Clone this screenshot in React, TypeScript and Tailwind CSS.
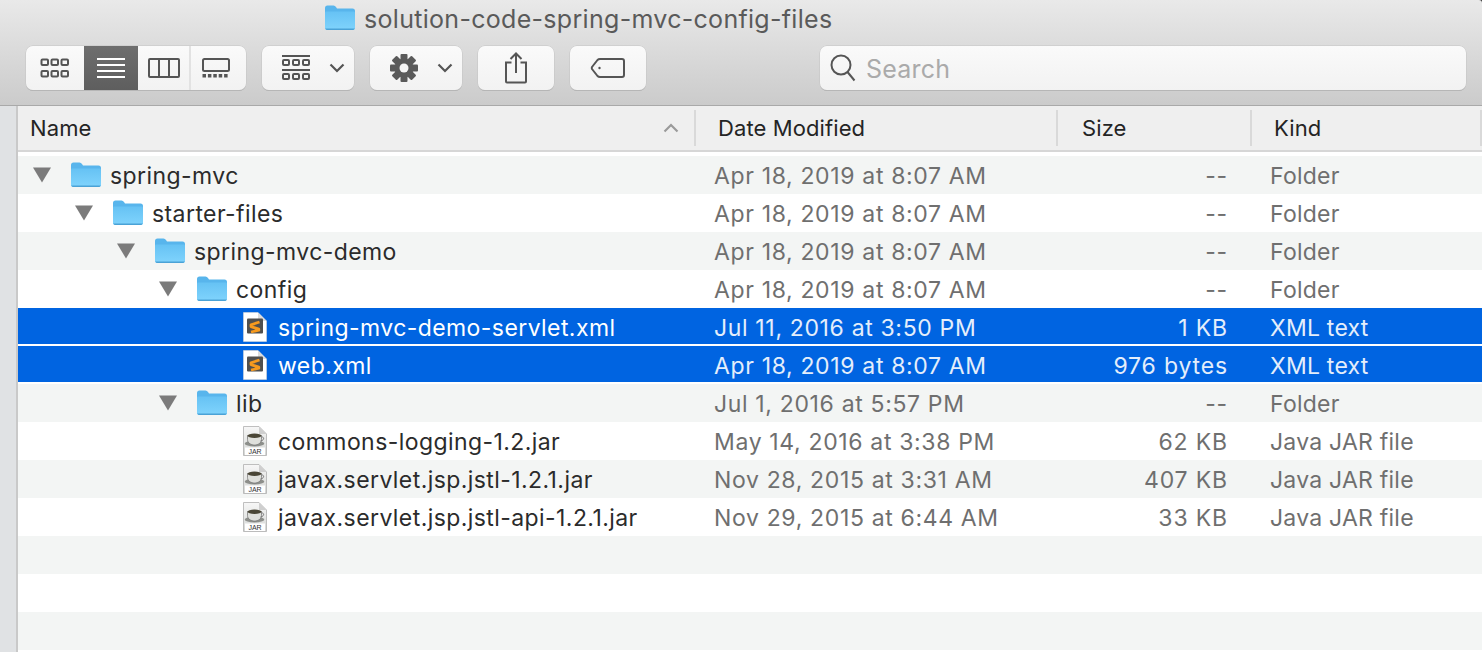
import React from "react";

const FONT = "font-['Inter','Liberation_Sans',sans-serif]";

function Folder() {
  return (
    <svg width="32" height="26" viewBox="0 0 32 26" className="shrink-0">
      <defs>
        <linearGradient id="fb" x1="0" y1="0" x2="0" y2="1">
          <stop offset="0" stopColor="#66c2f4" />
          <stop offset="1" stopColor="#7fd3fc" />
        </linearGradient>
      </defs>
      <path d="M1 3Q1 0.500 3.500 0.500H9.500Q11 0.500 12 2L13 3.500H28.500Q31 3.500 31 6V22.500Q31 25 28.500 25H3.500Q1 25 1 22.500Z" fill="#58b5ec" />
      <path d="M1 7.500Q1 6.500 2 6.500H30Q31 6.500 31 7.500V22.500Q31 24.500 28.500 24.500H3.500Q1 24.500 1 22.500Z" fill="url(#fb)" />
      <path d="M1.500 23.500Q2 25 3.500 25H28.500Q30 25 30.500 23.500Z" fill="#4aa2d6" />
    </svg>
  );
}

function Triangle() {
  return (
    <svg width="18" height="16" viewBox="0 0 18 16" className="shrink-0">
      <path d="M0 0.500H18L9 15.500Z" fill="#7b7b7b" />
    </svg>
  );
}

function SublimeDoc() {
  return (
    <svg width="24" height="30" viewBox="0 0 24 30" className="shrink-0">
      <path d="M0.500 0.500H15L23.500 9V29.500H0.500Z" fill="#fff" stroke="#d8d8d8" strokeWidth="0.6" />
      <path d="M15 0.500V9H23.500Z" fill="#dcdcdc" />
      <rect x="4" y="6.500" width="16" height="15" rx="1" fill="#4f4f4f" />
      <path d="M16.500 10L8 12.800V14.600L15.800 17.200V18.200L8 20" fill="none" stroke="#f79a1e" strokeWidth="2.800" strokeLinejoin="round" />
    </svg>
  );
}

function JarDoc() {
  return (
    <svg width="24" height="30" viewBox="0 0 24 30" className="shrink-0">
      <defs>
        <linearGradient id="jd" x1="0" y1="0" x2="0" y2="1">
          <stop offset="0" stopColor="#f7f7f7" />
          <stop offset="1" stopColor="#d4d6d4" />
        </linearGradient>
      </defs>
      <path d="M0.500 0.500H16L23.500 8V29.500H0.500Z" fill="url(#jd)" stroke="#b0b0b0" strokeWidth="0.8" />
      <path d="M16 0.500V8H23.500Z" fill="#cfcfcf" />
      <ellipse cx="11.500" cy="17.500" rx="9.800" ry="3" fill="#8d8f8b" />
      <path d="M4.500 9.500H18.500V13.500C18.500 17 15 19 11.500 19C8 19 4.500 17 4.500 13.500Z" fill="#dfe0dc" stroke="#6e6e6e" strokeWidth="0.7" />
      <ellipse cx="11.500" cy="9.800" rx="7" ry="2.200" fill="#4a4636" />
      <path d="M18.500 11C21.500 10.500 21.500 14.500 17.500 15" fill="none" stroke="#777" strokeWidth="1" />
      <rect x="2" y="21.500" width="20" height="7.500" fill="#fff" />
      <text x="12" y="28" textAnchor="middle" fontSize="7" fontWeight="400" letterSpacing="0" fill="#333" fontFamily="Liberation Sans, sans-serif">JAR</text>
    </svg>
  );
}

function Gear() {
  return (
    <svg width="28" height="28" viewBox="0 0 28 28">
      {[0, 45, 90, 135].map((a) => (
        <rect key={a} x="10.500" y="0" width="7" height="28" rx="1" fill="#5a5a5a" transform={`rotate(${a} 14 14)`} />
      ))}
      <circle cx="14" cy="14" r="9.500" fill="#5a5a5a" />
      <circle cx="14" cy="14" r="4.500" fill="#f6f6f6" />
    </svg>
  );
}

function Chevron() {
  return (
    <svg width="16" height="10" viewBox="0 0 16 10">
      <path d="M1.500 1.500L8 8L14.500 1.500" fill="none" stroke="#555" strokeWidth="2.200" />
    </svg>
  );
}

function SortUp() {
  return (
    <svg width="16" height="10" viewBox="0 0 16 10">
      <path d="M1.500 8.500L8 2L14.500 8.500" fill="none" stroke="#9a9a9a" strokeWidth="2.200" />
    </svg>
  );
}

function IconGrid() {
  return (
    <svg width="30" height="22" viewBox="0 0 30 22" fill="none" stroke="#555" strokeWidth="2">
      {[1, 11, 21].map((x) =>
        [2.500, 14].map((y) => <rect key={`${x}${y}`} x={x + 0.500} y={y} width="6.500" height="5.500" rx="1" />)
      )}
    </svg>
  );
}

function IconList() {
  return (
    <svg width="28" height="22" viewBox="0 0 28 22" fill="#fff">
      {[1, 7, 13, 19].map((y) => <rect key={y} x="0" y={y} width="28" height="2" />)}
    </svg>
  );
}

function IconColumns() {
  return (
    <svg width="32" height="20" viewBox="0 0 32 20" fill="none" stroke="#555" strokeWidth="2">
      <rect x="1" y="1" width="30" height="18" rx="1" />
      <path d="M11 1V19M21 1V19" />
    </svg>
  );
}

function IconGallery() {
  return (
    <svg width="28" height="20" viewBox="0 0 28 20">
      <rect x="1" y="1" width="26" height="12" rx="1.500" fill="none" stroke="#555" strokeWidth="2" />
      {[0, 5.400, 10.800, 16.200, 21.600].map((x) => <rect key={x} x={x + 0.500} y="16" width="3.500" height="3.500" fill="#555" />)}
    </svg>
  );
}

function IconGroup() {
  return (
    <svg width="28" height="26" viewBox="0 0 28 26">
      <rect x="0" y="0" width="28" height="2" fill="#555" />
      <rect x="0" y="14" width="28" height="2" fill="#555" />
      <g fill="none" stroke="#555" strokeWidth="2">
        {[1, 11, 21].map((x) =>
          [5, 19].map((y) => <rect key={`${x}${y}`} x={x} y={y} width="6" height="5" rx="1" />)
        )}
      </g>
    </svg>
  );
}

function IconShare() {
  return (
    <svg width="24" height="32" viewBox="0 0 24 32" fill="none" stroke="#555" strokeWidth="2">
      <path d="M7.500 10.500H2V29.500Q2 30.500 3 30.500H21Q22 30.500 22 29.500V10.500H16.500" />
      <path d="M12 21V2M6.500 7L12 1.500L17.500 7" />
    </svg>
  );
}

function IconTag() {
  return (
    <svg width="36" height="22" viewBox="0 0 36 22" fill="none" stroke="#555" strokeWidth="2">
      <path d="M10 2H32Q34 2 34 4V18Q34 20 32 20H10Q8.500 20 7.500 19L2 12Q1.500 11 2 10L7.500 3Q8.500 2 10 2Z" strokeLinejoin="round" />
      <circle cx="9.500" cy="11" r="1.200" fill="#555" stroke="none" />
    </svg>
  );
}

function IconSearch() {
  return (
    <svg width="26" height="28" viewBox="0 0 26 28" fill="none" stroke="#555" strokeWidth="2">
      <circle cx="11" cy="11" r="9.500" />
      <path d="M17.500 18L24.500 26.500" />
    </svg>
  );
}

const btn =
  "h-[44px] flex items-center justify-center rounded-[7px] bg-gradient-to-b from-[#fafafa] to-[#f2f2f2] shadow-[0_0_0_0.5px_#c4c4c4,0_1px_0_#a9a9a9]";

type Row = {
  name: string;
  depth: number;
  kind: "folder" | "xml" | "jar";
  date: string;
  size: string;
  type: string;
  selected?: boolean;
};

const rows: Row[] = [
  { name: "spring-mvc", depth: 0, kind: "folder", date: "Apr 18, 2019 at 8:07 AM", size: "--", type: "Folder" },
  { name: "starter-files", depth: 1, kind: "folder", date: "Apr 18, 2019 at 8:07 AM", size: "--", type: "Folder" },
  { name: "spring-mvc-demo", depth: 2, kind: "folder", date: "Apr 18, 2019 at 8:07 AM", size: "--", type: "Folder" },
  { name: "config", depth: 3, kind: "folder", date: "Apr 18, 2019 at 8:07 AM", size: "--", type: "Folder" },
  { name: "spring-mvc-demo-servlet.xml", depth: 4, kind: "xml", date: "Jul 11, 2016 at 3:50 PM", size: "1 KB", type: "XML text", selected: true },
  { name: "web.xml", depth: 4, kind: "xml", date: "Apr 18, 2019 at 8:07 AM", size: "976 bytes", type: "XML text", selected: true },
  { name: "lib", depth: 3, kind: "folder", date: "Jul 1, 2016 at 5:57 PM", size: "--", type: "Folder" },
  { name: "commons-logging-1.2.jar", depth: 4, kind: "jar", date: "May 14, 2016 at 3:38 PM", size: "62 KB", type: "Java JAR file" },
  { name: "javax.servlet.jsp.jstl-1.2.1.jar", depth: 4, kind: "jar", date: "Nov 28, 2015 at 3:31 AM", size: "407 KB", type: "Java JAR file" },
  { name: "javax.servlet.jsp.jstl-api-1.2.1.jar", depth: 4, kind: "jar", date: "Nov 29, 2015 at 6:44 AM", size: "33 KB", type: "Java JAR file" },
];

function FileRow({ row, index }: { row: Row; index: number }) {
  const stripe = index % 2 === 0 ? "bg-[#f3f5f4]" : "bg-white";
  const bg = row.selected ? "bg-[#0064e1] shadow-[inset_0_-2px_0_#ffffff]" : stripe;
  const main = row.selected ? "text-white" : "text-[#2b2b2b]";
  const sub = row.selected ? "text-[#e4eefb]" : "text-[#6f6f6f]";
  const indent = [
    "pl-[15px]",
    "pl-[57px]",
    "pl-[99px]",
    "pl-[141px]",
    "pl-[225px]",
  ][row.depth];
  return (
    <div className={`h-[38px] flex items-center shrink-0 ${bg}`}>
      <div className={`w-[677px] flex items-center ${indent} ${main}`}>
        {row.kind === "folder" ? (
          <>
            <Triangle />
            <span className="ml-[19px] mr-[8px] flex"><Folder /></span>
          </>
        ) : (
          <span className="mr-[11px] flex">{row.kind === "xml" ? <SublimeDoc /> : <JarDoc />}</span>
        )}
        <span className="pt-[2px] tracking-[0.42px]">{row.name}</span>
      </div>
      <div className={`w-[362px] pl-[19px] pt-[2px] tracking-[0.65px] ${sub}`}>{row.date}</div>
      <div className={`w-[194px] pr-[23px] pt-[2px] text-right tracking-[0.85px] ${sub}`}>{row.size}</div>
      <div className={`pl-[19px] pt-[2px] ${sub}`}>{row.type}</div>
    </div>
  );
}

function HeaderCell({ label, className, children }: { label: string; className: string; children?: React.ReactNode }) {
  return (
    <div className={`h-[36px] flex items-center border-r-2 border-[#d9d9d9] ${className}`}>
      {label}
      {children}
    </div>
  );
}

export default function App() {
  return (
    <div className={`w-[1482px] h-[652px] overflow-hidden bg-[#3a3a3a] flex flex-col tracking-[0.23px] text-[23px] ${FONT}`}>
      <header className="h-[106px] shrink-0 flex flex-col rounded-tr-[3px] bg-gradient-to-b from-[#e9e9e9] to-[#cbcbcb] border-b border-[#a9a9a9]">
        <div className="h-[46px] flex items-start pt-[5px] pl-[324px] gap-[8px] text-[25px] tracking-[0.3px] text-[#5a5a5a] leading-[28px]">
          <Folder />
          <span>solution-code-spring-mvc-config-files</span>
        </div>
        <div className="flex pl-[26px]">
          <div className={`${btn} w-[220px] overflow-hidden`}>
            <div className="w-[58px] flex justify-center"><IconGrid /></div>
            <div className="w-[54px] h-full flex items-center justify-center bg-gradient-to-b from-[#6e6e6e] to-[#5e5e5e]"><IconList /></div>
            <div className="w-[53px] h-full flex items-center justify-center border-r-2 border-[#e2e2e2]"><IconColumns /></div>
            <div className="w-[55px] flex justify-start pl-[11px]"><IconGallery /></div>
          </div>
          <div className={`${btn} w-[92px] ml-[16px] !justify-start gap-[19px] pl-[20px]`}>
            <IconGroup />
            <Chevron />
          </div>
          <div className={`${btn} w-[92px] ml-[16px] !justify-start gap-[19px] pl-[20px]`}>
            <Gear />
            <Chevron />
          </div>
          <div className={`${btn} w-[76px] ml-[16px]`}><IconShare /></div>
          <div className={`${btn} w-[76px] ml-[16px]`}><IconTag /></div>
          <div className={`${btn} w-[646px] ml-[174px] !justify-start pl-[10px] gap-[10px] text-[#aaaaaa] text-[25px]`}>
            <IconSearch />
            <span className="pt-[4px]">Search</span>
          </div>
        </div>
      </header>
      <div className="flex-1 min-h-0 flex">
        <aside className="w-[18px] shrink-0 bg-[#e0e2e4] border-r-2 border-[#c9c9c9]" />
        <main className="flex-1 min-w-0 flex flex-col bg-white">
          <div className="h-[46px] shrink-0 flex items-center bg-[#efefef] border-b-2 border-[#d6d6d6] text-[#242424] text-[22px] tracking-[0.1px]">
            <HeaderCell label="Name" className="w-[678px] pl-[12px] justify-between pr-[15px]">
              <SortUp />
            </HeaderCell>
            <HeaderCell label="Date Modified" className="w-[362px] pl-[22px]" />
            <HeaderCell label="Size" className="w-[194px] pl-[24px]" />
            <HeaderCell label="Kind" className="flex-1 pl-[22px]" />
          </div>
          <div className="h-[4px] shrink-0 bg-white" />
          <div className="flex-1 flex flex-col">
            {rows.map((r, i) => <FileRow key={r.name} row={r} index={i} />)}
            <div className="h-[38px] shrink-0 bg-[#f3f5f4]" />
            <div className="h-[38px] shrink-0 bg-white" />
            <div className="h-[38px] shrink-0 bg-[#f3f5f4]" />
            <div className="h-[2px] shrink-0 bg-white" />
          </div>
        </main>
      </div>
    </div>
  );
}
